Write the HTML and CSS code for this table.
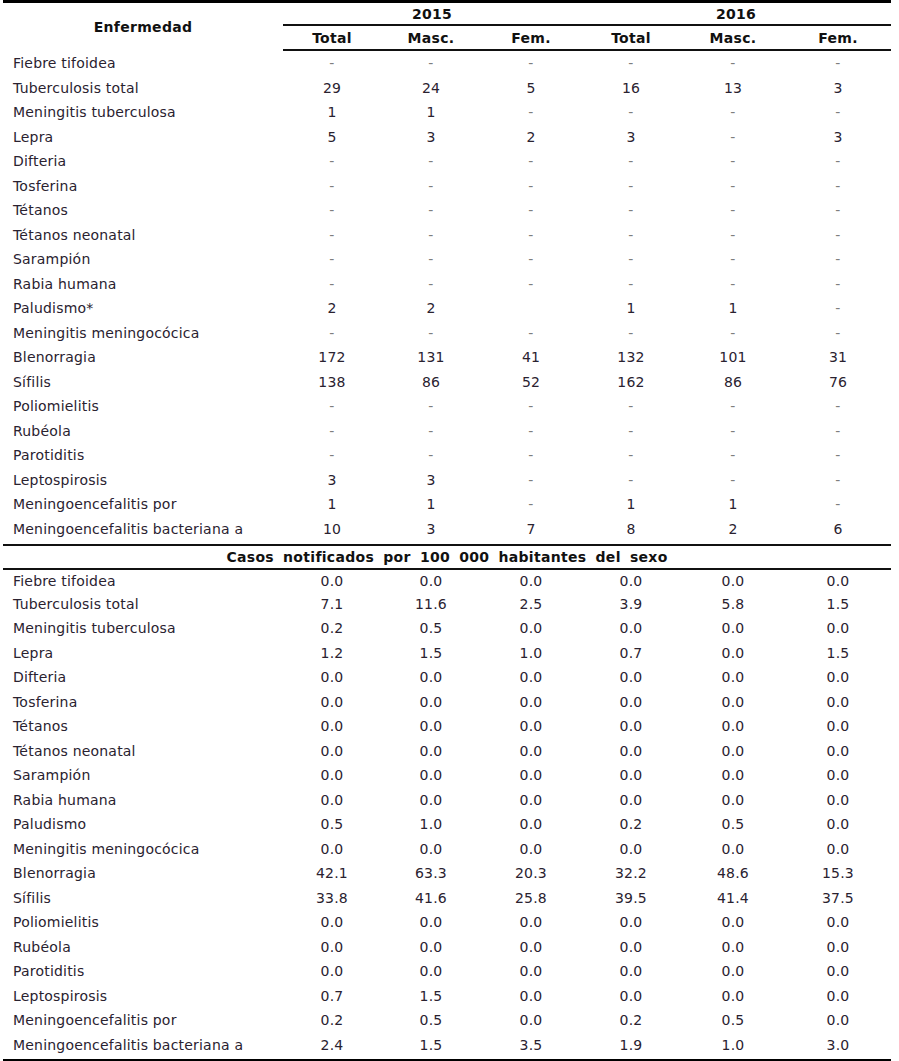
FILE: index.html
```html
<!DOCTYPE html>
<html lang="es">
<head>
<meta charset="utf-8">
<title>Enfermedades de declaración obligatoria</title>
<link rel="stylesheet" href="styles.css">
</head>
<body>
<table class="tbl">
  <colgroup>
    <col class="c-name">
    <col class="c-a"><col class="c-b"><col class="c-c">
    <col class="c-d"><col class="c-e"><col class="c-f">
  </colgroup>
  <thead>
    <tr class="h-year">
      <th rowspan="2" class="h-name">Enfermedad</th>
      <th colspan="3" class="h-y">2015</th>
      <th colspan="3" class="h-y">2016</th>
    </tr>
    <tr class="h-sub">
      <th>Total</th><th>Masc.</th><th>Fem.</th>
      <th>Total</th><th>Masc.</th><th>Fem.</th>
    </tr>
  </thead>
  <tbody class="sec">
    <tr><td>Fiebre tifoidea</td><td class="d">-</td><td class="d">-</td><td class="d">-</td><td class="d">-</td><td class="d">-</td><td class="d">-</td></tr>
    <tr><td>Tuberculosis total</td><td>29</td><td>24</td><td>5</td><td>16</td><td>13</td><td>3</td></tr>
    <tr><td>Meningitis tuberculosa</td><td>1</td><td>1</td><td class="d">-</td><td class="d">-</td><td class="d">-</td><td class="d">-</td></tr>
    <tr><td>Lepra</td><td>5</td><td>3</td><td>2</td><td>3</td><td class="d">-</td><td>3</td></tr>
    <tr><td>Difteria</td><td class="d">-</td><td class="d">-</td><td class="d">-</td><td class="d">-</td><td class="d">-</td><td class="d">-</td></tr>
    <tr><td>Tosferina</td><td class="d">-</td><td class="d">-</td><td class="d">-</td><td class="d">-</td><td class="d">-</td><td class="d">-</td></tr>
    <tr><td>Tétanos</td><td class="d">-</td><td class="d">-</td><td class="d">-</td><td class="d">-</td><td class="d">-</td><td class="d">-</td></tr>
    <tr><td>Tétanos neonatal</td><td class="d">-</td><td class="d">-</td><td class="d">-</td><td class="d">-</td><td class="d">-</td><td class="d">-</td></tr>
    <tr><td>Sarampión</td><td class="d">-</td><td class="d">-</td><td class="d">-</td><td class="d">-</td><td class="d">-</td><td class="d">-</td></tr>
    <tr><td>Rabia humana</td><td class="d">-</td><td class="d">-</td><td class="d">-</td><td class="d">-</td><td class="d">-</td><td class="d">-</td></tr>
    <tr><td>Paludismo*</td><td>2</td><td>2</td><td></td><td>1</td><td>1</td><td class="d">-</td></tr>
    <tr><td>Meningitis meningocócica</td><td class="d">-</td><td class="d">-</td><td class="d">-</td><td class="d">-</td><td class="d">-</td><td class="d">-</td></tr>
    <tr><td>Blenorragia</td><td>172</td><td>131</td><td>41</td><td>132</td><td>101</td><td>31</td></tr>
    <tr><td>Sífilis</td><td>138</td><td>86</td><td>52</td><td>162</td><td>86</td><td>76</td></tr>
    <tr><td>Poliomielitis</td><td class="d">-</td><td class="d">-</td><td class="d">-</td><td class="d">-</td><td class="d">-</td><td class="d">-</td></tr>
    <tr><td>Rubéola</td><td class="d">-</td><td class="d">-</td><td class="d">-</td><td class="d">-</td><td class="d">-</td><td class="d">-</td></tr>
    <tr><td>Parotiditis</td><td class="d">-</td><td class="d">-</td><td class="d">-</td><td class="d">-</td><td class="d">-</td><td class="d">-</td></tr>
    <tr><td>Leptospirosis</td><td>3</td><td>3</td><td class="d">-</td><td class="d">-</td><td class="d">-</td><td class="d">-</td></tr>
    <tr><td>Meningoencefalitis por</td><td>1</td><td>1</td><td class="d">-</td><td>1</td><td>1</td><td class="d">-</td></tr>
    <tr class="end"><td>Meningoencefalitis bacteriana a</td><td>10</td><td>3</td><td>7</td><td>8</td><td>2</td><td>6</td></tr>
  </tbody>
  <tbody class="sec sec-rate">
    <tr class="sec-head"><th colspan="7">Casos notificados por 100 000 habitantes del sexo</th></tr>
    <tr class="first"><td>Fiebre tifoidea</td><td>0.0</td><td>0.0</td><td>0.0</td><td>0.0</td><td>0.0</td><td>0.0</td></tr>
    <tr><td>Tuberculosis total</td><td>7.1</td><td>11.6</td><td>2.5</td><td>3.9</td><td>5.8</td><td>1.5</td></tr>
    <tr><td>Meningitis tuberculosa</td><td>0.2</td><td>0.5</td><td>0.0</td><td>0.0</td><td>0.0</td><td>0.0</td></tr>
    <tr><td>Lepra</td><td>1.2</td><td>1.5</td><td>1.0</td><td>0.7</td><td>0.0</td><td>1.5</td></tr>
    <tr><td>Difteria</td><td>0.0</td><td>0.0</td><td>0.0</td><td>0.0</td><td>0.0</td><td>0.0</td></tr>
    <tr><td>Tosferina</td><td>0.0</td><td>0.0</td><td>0.0</td><td>0.0</td><td>0.0</td><td>0.0</td></tr>
    <tr><td>Tétanos</td><td>0.0</td><td>0.0</td><td>0.0</td><td>0.0</td><td>0.0</td><td>0.0</td></tr>
    <tr><td>Tétanos neonatal</td><td>0.0</td><td>0.0</td><td>0.0</td><td>0.0</td><td>0.0</td><td>0.0</td></tr>
    <tr><td>Sarampión</td><td>0.0</td><td>0.0</td><td>0.0</td><td>0.0</td><td>0.0</td><td>0.0</td></tr>
    <tr><td>Rabia humana</td><td>0.0</td><td>0.0</td><td>0.0</td><td>0.0</td><td>0.0</td><td>0.0</td></tr>
    <tr><td>Paludismo</td><td>0.5</td><td>1.0</td><td>0.0</td><td>0.2</td><td>0.5</td><td>0.0</td></tr>
    <tr><td>Meningitis meningocócica</td><td>0.0</td><td>0.0</td><td>0.0</td><td>0.0</td><td>0.0</td><td>0.0</td></tr>
    <tr><td>Blenorragia</td><td>42.1</td><td>63.3</td><td>20.3</td><td>32.2</td><td>48.6</td><td>15.3</td></tr>
    <tr><td>Sífilis</td><td>33.8</td><td>41.6</td><td>25.8</td><td>39.5</td><td>41.4</td><td>37.5</td></tr>
    <tr><td>Poliomielitis</td><td>0.0</td><td>0.0</td><td>0.0</td><td>0.0</td><td>0.0</td><td>0.0</td></tr>
    <tr><td>Rubéola</td><td>0.0</td><td>0.0</td><td>0.0</td><td>0.0</td><td>0.0</td><td>0.0</td></tr>
    <tr><td>Parotiditis</td><td>0.0</td><td>0.0</td><td>0.0</td><td>0.0</td><td>0.0</td><td>0.0</td></tr>
    <tr><td>Leptospirosis</td><td>0.7</td><td>1.5</td><td>0.0</td><td>0.0</td><td>0.0</td><td>0.0</td></tr>
    <tr><td>Meningoencefalitis por</td><td>0.2</td><td>0.5</td><td>0.0</td><td>0.2</td><td>0.5</td><td>0.0</td></tr>
    <tr class="end"><td>Meningoencefalitis bacteriana a</td><td>2.4</td><td>1.5</td><td>3.5</td><td>1.9</td><td>1.0</td><td>3.0</td></tr>
  </tbody>
</table>
</body>
</html>
```

FILE: styles.css
```css
html, body {
  margin: 0;
  padding: 0;
  background: #ffffff;
}

body {
  font-family: "DejaVu Sans", Verdana, sans-serif;
  font-size: 14px;
  letter-spacing: 0.2px;
  color: #2a2230;
}

.tbl {
  margin: 0 0 0 3px;
  width: 888px;
  table-layout: fixed;
  border-collapse: collapse;
  border-top: 3px solid #000;
  border-bottom: 3px solid #000;
}

.c-name { width: 280px; }
.c-a { width: 98px; }
.c-b { width: 100px; }
.c-c { width: 100px; }
.c-d { width: 100px; }
.c-e { width: 104px; }
.c-f { width: 106px; }

.tbl th {
  font-weight: bold;
  color: #111;
  padding: 0;
  text-align: center;
  letter-spacing: 0.3px;
}

.h-year th {
  height: 21px;
}

.h-y {
  border-bottom: 2px solid #111;
  vertical-align: middle;
}

.h-name {
  vertical-align: middle;
}

.h-sub th {
  height: 23px;
  border-bottom: 2px solid #111;
}

.tbl td {
  height: 24.5px;
  padding: 0;
  text-align: center;
  vertical-align: middle;
  white-space: nowrap;
}

.tbl td:first-child {
  text-align: left;
  padding-left: 10px;
}

.tbl td.d {
  color: #7e7e7e;
}

.sec .end td {
  height: 24.5px;
  padding-bottom: 3px;
}

.sec-head th {
  height: 22px;
  border-top: 2px solid #111;
  border-bottom: 2px solid #111;
  color: #111;
  word-spacing: 4px;
}

.sec-rate .first td {
  height: 21.5px;
}

.sec-rate .end td {
  height: 24.5px;
  padding-bottom: 1.5px;
}
```
